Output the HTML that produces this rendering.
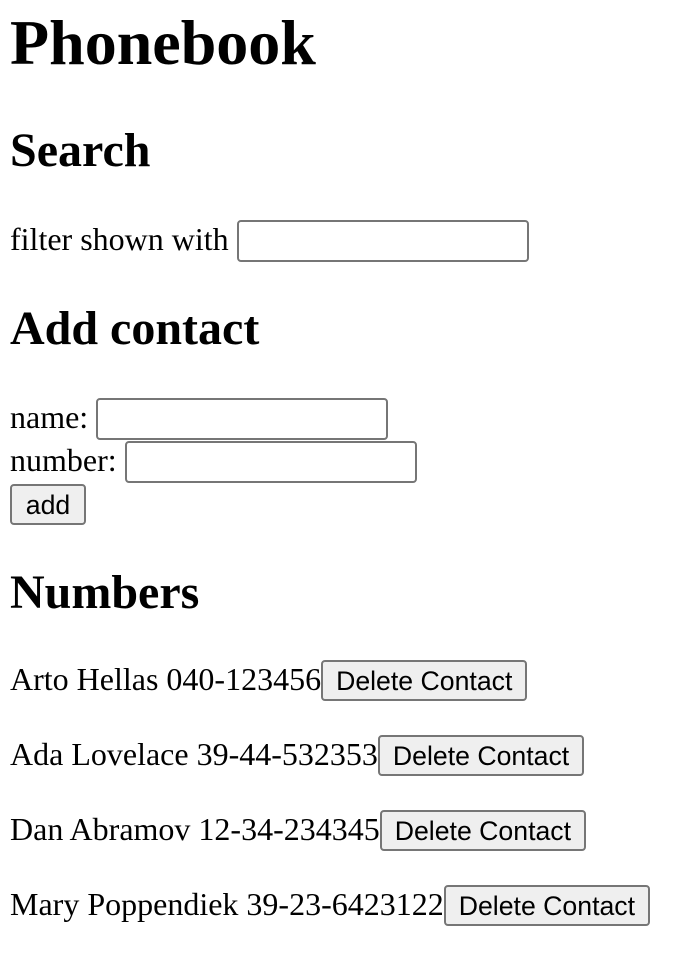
<!DOCTYPE html>
<html><head><meta charset="utf-8"><style>
html,body{margin:0;padding:0;background:#fff}
body{zoom:2;font-family:"Liberation Serif",serif;font-size:16px;color:#000;padding:3px 0 0 5px}
h1{font-size:32px;margin:0 0 21.44px 0;line-height:37px}
h2{font-size:24px;margin:19.92px 0;line-height:27.6px}
p{margin:16px 0;height:21.5px;line-height:21.5px}
input{box-sizing:border-box;width:146px;height:21px;border:1px solid #767676;border-radius:2px;padding:1px 2px;vertical-align:baseline;font-size:13px;margin:0}
button{box-sizing:border-box;font-family:"Liberation Sans",Arial,sans-serif;font-size:13.33px;background:#efefef;border:1px solid #767676;border-radius:2px;padding:0 6.5px;height:20.5px;margin:0;vertical-align:baseline;color:#000;line-height:18px}
.row{height:21.5px;line-height:21.5px}
form{margin:0}
</style></head><body>
<h1>Phonebook</h1>
<h2>Search</h2>
<div style="height:21.5px;line-height:21.5px">filter shown with <input></div>
<h2>Add contact</h2>
<form>
<div class="row">name: <input></div>
<div class="row">number: <input></div>
<div class="row"><button type="button" style="width:38px">add</button></div>
</form>
<h2 style="margin-top:20px;margin-bottom:19px">Numbers</h2>
<p>Arto Hellas 040-123456<button>Delete Contact</button></p>
<p>Ada Lovelace 39-44-532353<button>Delete Contact</button></p>
<p>Dan Abramov 12-34-234345<button>Delete Contact</button></p>
<p>Mary Poppendiek 39-23-6423122<button>Delete Contact</button></p>
</body></html>
